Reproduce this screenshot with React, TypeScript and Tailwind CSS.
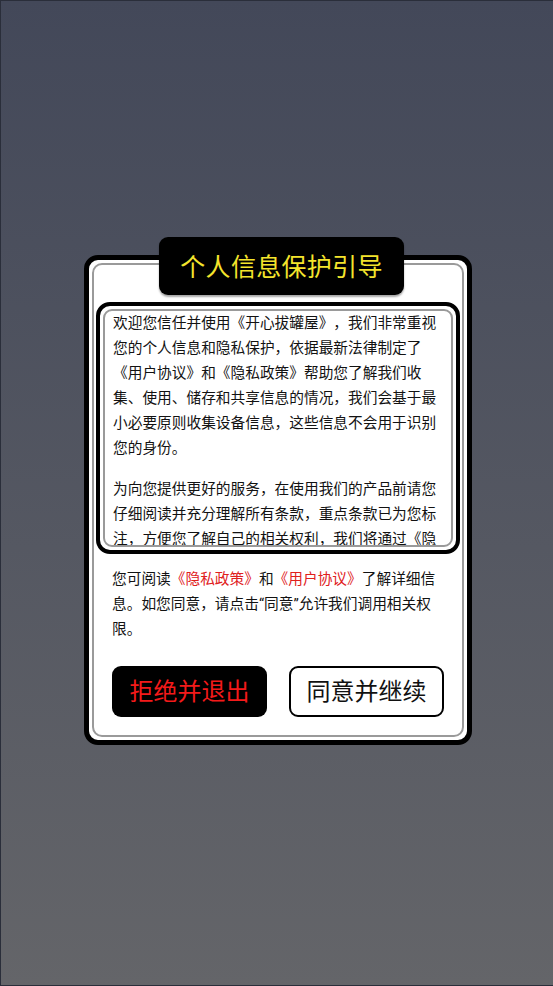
import React from 'react';

const CJK = { fontFamily: '"Roboto", "Noto Sans CJK SC", sans-serif' };

function PolicyText() {
  return (
    <div className="text-[14.7px] leading-[25px] text-[#121212]">
      <p>
        欢迎您信任并使用《开心拔罐屋》，我们非常重视您的个人信息和隐私保护，依据最新法律制定了《用户协议》和《隐私政策》帮助您了解我们收集、使用、储存和共享信息的情况，我们会基于最小必要原则收集设备信息，这些信息不会用于识别您的身份。
      </p>
      <p className="mt-4">
        为向您提供更好的服务，在使用我们的产品前请您仔细阅读并充分理解所有条款，重点条款已为您标注，方便您了解自己的相关权利，我们将通过《隐私政策》向您说明我们如何收集、使用和保护您的个人信息，以及您享有的查询、更正、删除等权利。
      </p>
      <p className="mt-4">
        如您对以上协议有任何疑问，可通过游戏内的客服渠道与我们联系。
      </p>
    </div>
  );
}

export default function App() {
  return (
    <div
      className="w-[553px] h-[986px] overflow-hidden border-t border-l border-b border-[#2a2e3a] bg-gradient-to-b from-[#434859] to-[#646569] [text-spacing-trim:space-all]"
      style={CJK}
    >
      <div className="pt-[254px] pl-[83px]">
        <div className="relative w-[388px] rounded-[14px] border-[5px] border-black bg-white p-[3px]">
          {/* title tab */}
          <div className="absolute left-[70px] top-[-23px] flex h-[58px] w-[245px] items-center justify-center rounded-[9px] bg-black pt-[3px] shadow-[0_2px_2px_rgba(0,0,0,0.35)]">
            <span className="text-[25px] leading-none tracking-[0.3px] text-[#f4e42c]">个人信息保护引导</span>
          </div>

          <div className="rounded-[10px] border-2 border-[#9a9a9a] px-[2px] pt-[37px] pb-[18px]">
            {/* scroll box */}
            <div className="rounded-[14px] border-4 border-black bg-white p-[3px]">
              <div className="h-[238px] overflow-hidden rounded-[9px] border-2 border-[#9a9a9a] pl-[8px] pr-[6px]">
                <PolicyText />
              </div>
            </div>

            <p className="mt-[13px] px-[16px] text-[14.7px] leading-[25px] text-[#121212]">
              您可阅读<span className="text-[#e0201c]">《隐私政策》</span>和<span className="text-[#e0201c]">《用户协议》</span>了解详细信息。如您同意，请点击“同意”允许我们调用相关权限。
            </p>

            <div className="mt-[24px] flex gap-[22px] px-[16px]">
              <button className="flex h-[51px] w-[155px] items-center justify-center rounded-[9px] bg-black text-[24px] text-[#f31a1a]">
                拒绝并退出
              </button>
              <button className="flex h-[51px] w-[155px] items-center justify-center rounded-[9px] border-[2.5px] border-black bg-white text-[24px] text-[#111111]">
                同意并继续
              </button>
            </div>
          </div>
        </div>
      </div>
    </div>
  );
}
